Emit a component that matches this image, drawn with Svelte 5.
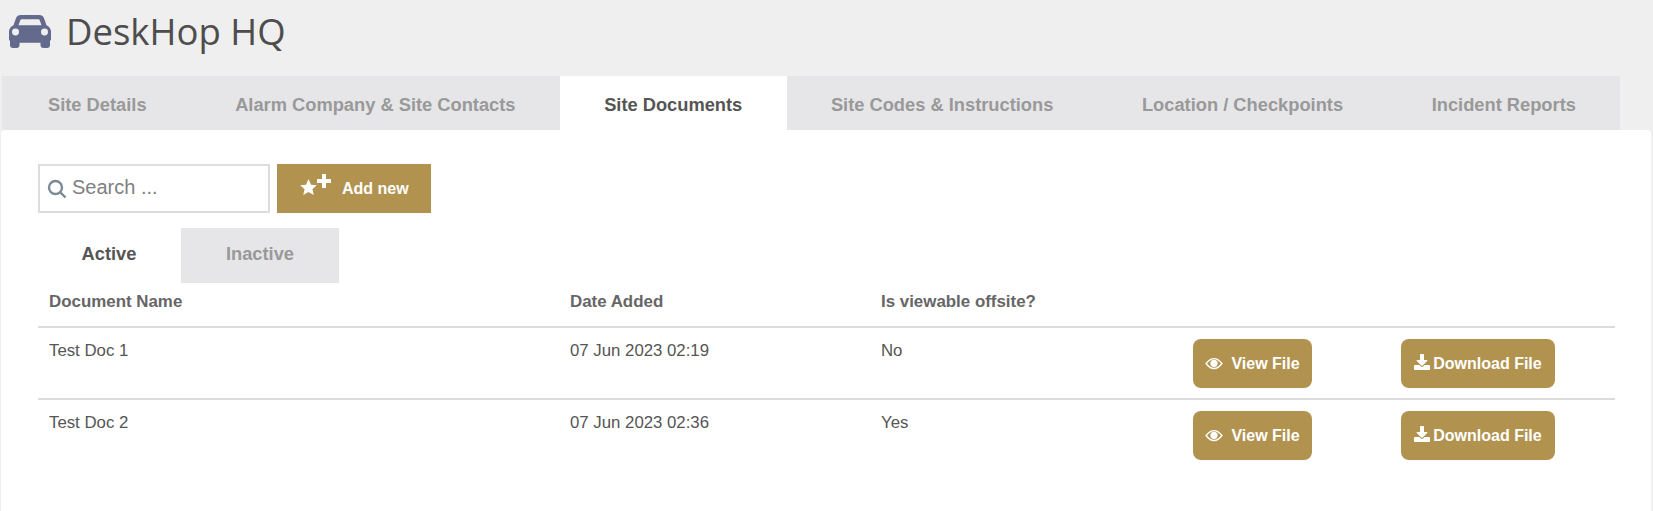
<script>
	const tabs = [
		'Site Details',
		'Alarm Company & Site Contacts',
		'Site Documents',
		'Site Codes & Instructions',
		'Location / Checkpoints',
		'Incident Reports'
	];
	const docs = [
		{ name: 'Test Doc 1', added: '07 Jun 2023 02:19', offsite: 'No' },
		{ name: 'Test Doc 2', added: '07 Jun 2023 02:36', offsite: 'Yes' }
	];
</script>

<div class="page">
	<header class="title">
		<svg class="car" viewBox="0 0 42 34" preserveAspectRatio="none" aria-hidden="true">
			<path
				fill-rule="evenodd"
				d="M12 0H30C33 0 34.500 1.500 35.300 4L37.500 10.500C40 11.500 42 14 42 17V25C42 26 41.500 26.500 41 26.500V31C41 33 40 34 38 34H34.500C32.500 34 31.500 33 31.500 31V28.500H10.500V31C10.500 33 9.500 34 7.500 34H4C2 34 1 33 1 31V26.500C.5 26.500 0 26 0 25V17C0 14 2 11.500 4.500 10.500L6.700 4C7.500 1.500 9 0 12 0ZM12.500 4.500C12 4.500 11.500 4.800 11.300 5.500L9.500 10.500H32.500L30.700 5.500C30.500 4.800 30 4.500 29.500 4.500ZM6.500 14a3.500 3.500 0 1 0 0 7a3.500 3.500 0 1 0 0-7ZM35.500 14a3.500 3.500 0 1 0 0 7a3.500 3.500 0 1 0 0-7Z"
			/>
		</svg>
		<h1>DeskHop HQ</h1>
	</header>

	<nav class="tabs">
		{#each tabs as tab, i}
			<button class="tab" class:on={i === 2}>{tab}</button>
		{/each}
	</nav>

	<main class="panel">
		<div class="toolbar">
			<label class="search">
				<svg viewBox="0 0 20 20" aria-hidden="true">
					<circle cx="8.500" cy="8.500" r="6.500" />
					<path d="M13.300 13.300 18.500 18.500" />
				</svg>
				<input type="text" placeholder="Search ..." aria-label="Search" />
			</label>
			<button class="add">
				<svg viewBox="0 0 31 22" aria-hidden="true">
					<path class="fill" d="M8.500 5L11 10.700L16.800 11.200L12.400 15.200L13.800 21L8.500 17.900L3.200 21L4.600 15.200L.2 11.200L6 10.700Z" />
					<path class="fill" d="M22 0H26V5H31V9H26V14H22V9H17V5H22Z" />
				</svg>
				Add new
			</button>
		</div>

		<div class="subtabs">
			<button class="subtab on">Active</button>
			<button class="subtab">Inactive</button>
		</div>

		<table>
			<thead>
				<tr>
					<th class="c-name">Document Name</th>
					<th class="c-date">Date Added</th>
					<th class="c-off">Is viewable offsite?</th>
					<th class="c-view"></th>
					<th></th>
				</tr>
			</thead>
			<tbody>
				{#each docs as doc}
					<tr>
						<td>{doc.name}</td>
						<td>{doc.added}</td>
						<td>{doc.offsite}</td>
						<td class="action">
							<button class="file view">
								<svg viewBox="0 0 20 14" aria-hidden="true">
									<path class="eye" d="M1.200 7C4 3.200 7 1.500 10 1.500S16 3.200 18.800 7C16 10.800 13 12.500 10 12.500S4 10.800 1.200 7Z" />
									<circle class="fill" cx="10" cy="6.800" r="4" />
								</svg>
								View File
							</button>
						</td>
						<td class="action">
							<button class="file download">
								<svg viewBox="0 0 512 512" aria-hidden="true">
									<path class="fill" d="M216 0h80c13 0 24 11 24 24v168h88c18 0 27 22 14 34L269 379c-7 7-19 7-26 0L90 226c-13-12-4-34 14-34h88V24c0-13 11-24 24-24zm296 376v112c0 13-11 24-24 24H24c-13 0-24-11-24-24V376c0-13 11-24 24-24h147l49 49c20 20 52 20 72 0l49-49h147c13 0 24 11 24 24z" />
								</svg>
								Download File
							</button>
						</td>
					</tr>
				{/each}
			</tbody>
		</table>
	</main>
</div>

<style>
	:global(body) {
		margin: 0;
		background: #efefef;
	}

	.page {
		height: 511px;
		overflow: hidden;
		font-family: 'Liberation Sans', Arial, sans-serif;
		color: #555;
	}

	button {
		font: inherit;
		border: none;
		cursor: pointer;
	}

	.title {
		display: flex;
		align-items: center;
		gap: 15px;
		height: 76px;
		padding: 0 0 13px 9px;
		box-sizing: border-box;
	}

	.car {
		width: 42px;
		height: 33px;
		fill: #636a8c;
	}

	h1 {
		margin: 0 0 2px;
		font: 400 36.500px 'Open Sans', sans-serif;
		color: #4d4d4d;
	}

	.tabs {
		display: flex;
		width: 1618px;
		margin-left: 2px;
		height: 55px;
		background: #e6e6e8;
	}

	.tab {
		flex: none;
		padding: 2px 44.300px 0;
		background: none;
		color: #999;
		font-size: 18.300px;
		font-weight: 700;
		white-space: nowrap;
	}

	.tab:first-child {
		padding-left: 46px;
	}

	.tab.on {
		background: #fff;
		color: #555;
	}

	.panel {
		box-sizing: border-box;
		width: 1650px;
		height: 400px;
		margin: -1px 0 0 1px;
		padding: 34px 36px 0;
		background: #fff;
		border-radius: 4px;
	}

	.toolbar {
		display: flex;
		gap: 7px;
		height: 49px;
	}

	.search {
		box-sizing: border-box;
		display: flex;
		align-items: center;
		gap: 5px;
		width: 232px;
		margin-left: 1px;
		padding-left: 7px;
		border: 2px solid #ddd;
	}

	.search svg {
		flex: none;
		width: 20px;
		height: 20px;
		fill: none;
		stroke: #7d8a94;
		stroke-width: 2.400;
	}

	.search input {
		width: 170px;
		padding: 0 0 3px;
		border: none;
		outline: none;
		font: 20px 'Liberation Sans', Arial, sans-serif;
	}

	.search input::placeholder {
		color: #808080;
		opacity: 1;
	}

	.add {
		display: flex;
		align-items: center;
		gap: 11px;
		width: 154px;
		padding: 0 0 0 23px;
		background: #b1934f;
		color: #fff;
		font-size: 16px;
		font-weight: 700;
	}

	.add svg {
		width: 31px;
		height: 22px;
		margin-top: -8px;
	}

	.fill {
		fill: #fff;
	}

	.subtabs {
		display: flex;
		height: 55px;
		margin-top: 15px;
	}

	.subtab {
		width: 144px;
		padding: 0 0 3px;
		background: none;
		color: #555;
		font-size: 18.300px;
		font-weight: 700;
	}

	.subtab + .subtab {
		width: 158px;
		background: #e6e6e8;
		color: #999;
	}

	table {
		width: 1577px;
		margin-left: 1px;
		border-collapse: collapse;
		table-layout: fixed;
	}

	th {
		height: 44px;
		padding: 0 11px 6px;
		box-sizing: border-box;
		text-align: left;
		font-size: 16.900px;
		color: #666;
		border-bottom: 2px solid #dcdcdc;
	}

	td {
		height: 72px;
		padding: 13px 11px 0;
		box-sizing: border-box;
		vertical-align: top;
		color: #555;
		font-size: 16.800px;
		border-bottom: 2px solid #dcdcdc;
	}

	td.action {
		padding-top: 11px;
	}

	tbody tr:last-child td {
		border-bottom: none;
	}

	.c-name {
		width: 521px;
	}

	.c-date {
		width: 311px;
	}

	.c-off {
		width: 312px;
	}

	.c-view {
		width: 208px;
	}

	.file {
		display: inline-flex;
		align-items: center;
		justify-content: center;
		height: 49px;
		background: #b1934f;
		color: #fff;
		border-radius: 8px;
		font-size: 16px;
		font-weight: 700;
	}

	.view {
		gap: 8px;
		width: 119px;
	}

	.view svg {
		width: 18px;
		height: 13px;
	}

	.eye {
		fill: none;
		stroke: #fff;
		stroke-width: 1.500;
	}

	.download {
		gap: 3px;
		width: 154px;
	}

	.download svg {
		width: 16px;
		height: 16px;
		margin-top: -4px;
	}
</style>
